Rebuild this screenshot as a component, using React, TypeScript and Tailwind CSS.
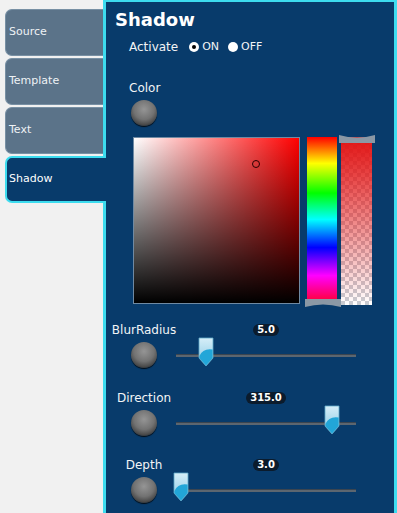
import React from 'react';

const tabs = ['Source', 'Template', 'Text', 'Shadow'];

const sliders = [
  { label: 'BlurRadius', value: '5.0', thumb: 22, gap: 'mt-[17px]' },
  { label: 'Direction', value: '315.0', thumb: 148, gap: 'mt-[22px]' },
  { label: 'Depth', value: '3.0', thumb: -3, gap: 'mt-[21px]' },
];

const Knob: React.FC = () => (
  <div className="h-[26px] w-[26px] rounded-full bg-[radial-gradient(circle_at_50%_36%,#959595_0%,#727272_48%,#4a4a4a_72%,#101010_92%,#000_100%)] shadow-[0_1px_1px_rgba(0,0,0,0.8)]" />
);

const Thumb: React.FC = () => (
  <svg width="16" height="30" viewBox="0 0 16 30">
    <defs>
      <linearGradient id="thumbTop" x1="0" y1="0" x2="0" y2="1">
        <stop offset="0" stopColor="#d6eef8" />
        <stop offset="1" stopColor="#86c8e4" />
      </linearGradient>
    </defs>
    <path d="M1 1 H15 V21 L8 29 L1 21 Z" fill="url(#thumbTop)" stroke="#5fa9c9" strokeWidth="0.8" />
    <path d="M1.4 19 Q5 11 14.6 12.5 V21 L8 28.4 L1.4 21 Z" fill="#22a6d8" />
  </svg>
);

// little grey grip drawn over the colour bars
const Grip: React.FC<{ flip?: boolean }> = ({ flip }) => (
  <svg width="36" height="8" viewBox="0 0 36 8" className={flip ? 'rotate-180' : ''}>
    <path d="M0 0 Q18 5 36 0 V8 H0 Z" fill="#8b98a5" />
  </svg>
);

export default function App() {
  return (
    <div className="flex h-[513px] w-[397px] overflow-hidden bg-[#f1f1f1] font-['DejaVu_Sans',Verdana,sans-serif]">
      {/* Tab column */}
      <div className="flex w-[103px] flex-col gap-[2px] pl-[5px] pt-[9px]">
        {tabs.map((t) => {
          const active = t === 'Shadow';
          return (
            <div
              key={t}
              className={
                active
                  ? 'relative z-10 -mr-[3px] flex h-[47px] items-center rounded-l-[7px] border-2 border-r-0 border-[#3ddcef] bg-[#083b6b] pl-[2px] text-[11px] text-white'
                  : 'flex h-[47px] items-center rounded-l-[7px] border border-r-0 border-[#7890a4] bg-[#5b7389] pl-[3px] text-[11px] text-[#eef2f5]'
              }
            >
              {t}
            </div>
          );
        })}
      </div>

      {/* Panel */}
      <div className="flex flex-1 flex-col border-l-[3px] border-r-[3px] border-t-2 border-[#3ddcef] bg-[#083b6b] pl-[7px] text-[12px] text-[#f2f4f6]">
        <h1 className="ml-[2px] mt-[6px] text-[18px] font-bold leading-[24px] text-white">Shadow</h1>

        <div className="ml-[16px] mt-[7px] flex h-[16px] items-center">
          <span>Activate</span>
          <span className="ml-[11px] flex h-[10px] w-[10px] items-center justify-center rounded-full bg-white">
            <span className="h-[4px] w-[4px] rounded-full bg-black" />
          </span>
          <span className="ml-[3px] text-[11px]">ON</span>
          <span className="ml-[9px] h-[10px] w-[10px] rounded-full bg-white" />
          <span className="ml-[3px] text-[11px]">OFF</span>
        </div>

        <div className="ml-[16px] mt-[25px] flex h-[16px] items-center">Color</div>
        <div className="ml-[18px] mt-[4px]">
          <Knob />
        </div>

        {/* Colour picker */}
        <div className="ml-[20px] mt-[11px] flex items-start">
          <div className="relative h-[167px] w-[167px] border border-[#6f8aa3] bg-[linear-gradient(to_bottom,rgba(0,0,0,0),#000),linear-gradient(to_right,#fff,#f00)]">
            <div className="absolute left-[118px] top-[22px] h-[8px] w-[8px] rounded-full border border-[#2a0000]" />
          </div>
          <div className="relative ml-[7px] h-[165px] w-[30px] bg-[linear-gradient(to_bottom,#f00_0%,#ff0_16%,#0f0_34%,#0ff_50%,#00f_67%,#f0f_84%,#f03_100%)]">
            <div className="absolute -bottom-[5px] -left-[2px]">
              <Grip flip />
            </div>
          </div>
          <div className="relative ml-[4px] h-[168px] w-[31px] bg-[repeating-conic-gradient(#c9cdd3_0%_25%,#ffffff_0%_50%)] bg-[length:8px_8px]">
            <div className="h-full w-full bg-[linear-gradient(to_bottom,#e21414_0%,rgba(226,20,20,0.8)_22%,rgba(226,20,20,0)_100%)]" />
            <div className="absolute -left-[2px] -top-[2px]">
              <Grip />
            </div>
          </div>
        </div>

        {/* Sliders */}
        {sliders.map((s) => (
          <div key={s.label} className={`${s.gap} flex flex-col`}>
            <div className="flex h-[16px] items-center">
              <div className="flex w-[62px] justify-center whitespace-nowrap">{s.label}</div>
              <div className="ml-[1px] flex w-[180px] justify-center">
                <span className="rounded-full bg-[#0b1b2c] px-[4px] text-[10px] font-bold leading-[12px] text-white">
                  {s.value}
                </span>
              </div>
            </div>
            <div className="mt-[4px] flex items-center">
              <div className="flex w-[62px] justify-center">
                <Knob />
              </div>
              <div className="relative ml-[1px] flex h-[26px] w-[180px] items-center">
                <div className="h-[3px] w-full border-t border-[#3b4550] bg-[#5c6670]" />
                <div className="absolute -top-[5px]" style={{ left: s.thumb }}>
                  <Thumb />
                </div>
              </div>
            </div>
          </div>
        ))}
      </div>
    </div>
  );
}
